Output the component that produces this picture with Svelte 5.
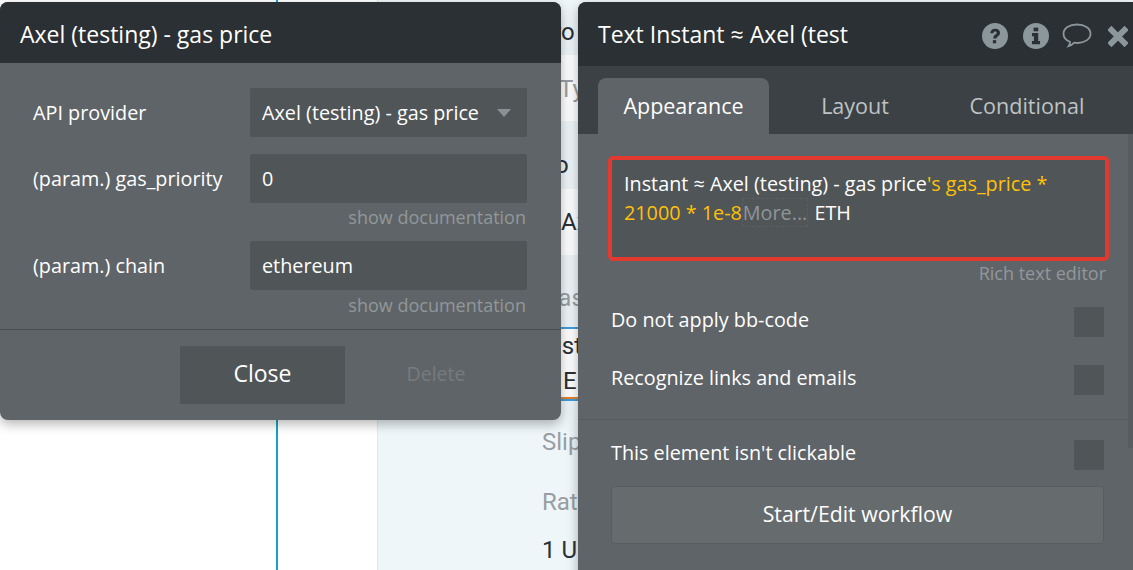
<script>
  const params = [
    { label: 'API provider', value: 'Axel (testing) - gas price', select: true },
    { label: '(param.) gas_priority', value: '0', doc: true },
    { label: '(param.) chain', value: 'ethereum', doc: true }
  ];
  const checks1 = ['Do not apply bb-code', 'Recognize links and emails'];
</script>

<div class="canvas">
  <div class="line teal"></div>
  <div class="line red"></div>
  <div class="bluepanel">
    <div class="band white b1"></div>
    <div class="band white b2"></div>
    <div class="band white b3"></div>
    <div class="bg t1">Pro</div>
    <div class="bg t2 grey">Ty</div>
    <div class="bg t3">o</div>
    <div class="bg t4">Ax</div>
    <div class="bg t5 grey">Gas</div>
    <div class="selected"></div>
    <div class="bg t6">Inst</div>
    <div class="bg t7">E</div>
    <div class="bg t8 grey">Slip</div>
    <div class="bg t9 grey">Rat</div>
    <div class="bg t10">1 U</div>
  </div>

  <section class="win left">
    <header class="head"><span class="title">Axel (testing) - gas price</span></header>
    <div class="form">
      {#each params as p}
        <div class="row">
          <div class="label">{p.label}</div>
          <div class="field">
            <span>{p.value}</span>
            {#if p.select}<i class="caret"></i>{/if}
          </div>
        </div>
        {#if p.doc}<div class="doc">show documentation</div>{/if}
      {/each}
    </div>
    <div class="foot">
      <div class="close">Close</div>
      <div class="delete">Delete</div>
    </div>
  </section>

  <section class="win right">
    <header class="head">
      <span class="title">Text Instant ≈ Axel (test</span>
      <div class="icons">
        <svg width="26" height="26" viewBox="0 0 27 27"><circle cx="13.5" cy="13.5" r="13.5" fill="#8c979c"/><path d="M8.600 10.600c.3-3 2.400-4.500 5.100-4.500 2.900 0 5 1.700 5 4.100 0 1.900-1 2.800-2.300 3.700-1 .7-1.300 1.100-1.300 2.200h-3.300c-.1-2 .4-3 1.800-4 1.100-.8 1.700-1.200 1.700-2 0-.8-.7-1.300-1.600-1.300-1 0-1.700.6-1.900 1.900z" fill="#2a3033"/><rect x="11.300" y="17.800" width="3.400" height="3.300" fill="#2a3033"/></svg>
        <svg width="26" height="26" viewBox="0 0 27 27"><circle cx="13.500" cy="13.500" r="13.500" fill="#8c979c"/><rect x="11" y="4.800" width="4.800" height="3.800" fill="#2a3033"/><path d="M9.300 10.400h6.500v8.300h1.900v3.300H9.300v-3.300h2v-5h-2z" fill="#2a3033"/></svg>
        <svg class="bubble" width="30" height="26" viewBox="0 0 30 26"><path d="M15 1.500c7.500 0 13.500 3.800 13.500 9.200S22.500 20 15.500 20c-1.200 0-2.300-.1-3.300-.3-1.500 1.700-3.500 3-5.700 3.500 1-1.300 1.500-2.700 1.500-4.300C4 17.200 1.500 14.200 1.500 10.700 1.500 5.300 7.500 1.500 15 1.500z" fill="none" stroke="#8c979c" stroke-width="1.800"/></svg>
        <svg class="x" width="20" height="21" viewBox="0 0 20 21"><path d="M3.500 4l13 13M16.500 4l-13 13" stroke="#8c979c" stroke-width="6" stroke-linecap="square" fill="none"/></svg>
      </div>
    </header>
    <nav class="tabs">
      <div class="tab active">Appearance</div>
      <div class="tab layout">Layout</div>
      <div class="tab cond">Conditional</div>
    </nav>
    <div class="scroll"></div>
    <div class="body">
      <div class="editor">
        <div>Instant ≈ Axel (testing) - gas price<span class="dyn">'s gas_price * 21000 * 1e-8</span><span class="more">More...</span> ETH</div>
      </div>
      <div class="rich">Rich text editor</div>
      <div class="checks">
        {#each checks1 as c}
          <div class="check"><span>{c}</span><i class="box"></i></div>
        {/each}
      </div>
      <hr class="sep" />
      <div class="check third"><span>This element isn't clickable</span><i class="box"></i></div>
      <div class="wf">Start/Edit workflow</div>
    </div>
  </section>
</div>

<style>
  :global(body) { margin: 0; background: #fff; }
  .canvas {
    position: relative;
    width: 1133px;
    height: 570px;
    overflow: hidden;
    background: #fff;
    font-family: "Open Sans", sans-serif;
  }
  .line { position: absolute; top: 0; bottom: 0; width: 2px; }
  .teal { left: 276px; background: #17a2c4; }
  .red { left: 871px; width: 1px; background: #c0202a; }
  .bluepanel {
    position: absolute;
    left: 377px;
    top: 0;
    right: 0;
    bottom: 0;
    background: #eef6f9;
    border-left: 1px solid #d5ebf5;
    font-family: Roboto, sans-serif;
  }
  .band { position: absolute; left: 0; right: 0; background: #fff; }
  .b1 { top: 55px; height: 66px; }
  .b2 { top: 189px; height: 66px; }
  .b3 { top: 327px; height: 73px; }
  .selected {
    position: absolute;
    left: 0;
    right: 0;
    top: 327px;
    height: 74px;
    box-sizing: border-box;
    border-top: 2px solid #3f9ee0;
    border-bottom: 2px solid #3f9ee0;
    box-shadow: inset 0 -2px 0 #e8812a;
  }
  .bg { position: absolute; left: 164px; font-size: 24px; color: #2b3036; line-height: 26px; }
  .grey { color: #9a9ea3; }
  .t1 { top: 19px; left: 160px; }
  .t2 { top: 76px; left: 181px; }
  .t3 { top: 152px; left: 177px; }
  .t4 { top: 209px; left: 183px; }
  .t5 { top: 285px; }
  .t6 { top: 333px; }
  .t7 { top: 368px; left: 185px; }
  .t8 { top: 429px; }
  .t9 { top: 489px; }
  .t10 { top: 537px; }

  .win {
    position: absolute;
    top: 2px;
    background: #5f6468;
    color: #fff;
    box-shadow: 0 4px 12px rgba(0, 0, 0, 0.3);
  }
  .left {
    left: 0;
    width: 561px;
    height: 418px;
    border-radius: 8px;
  }
  .right {
    left: 578px;
    width: 555px;
    height: 600px;
    border-radius: 8px 0 0 0;
  }
  .head {
    display: flex;
    align-items: center;
    background: #2a3033;
    border-radius: 8px 8px 0 0;
    padding: 2px 20px 0;
    height: 61px;
    font-size: 23px;
    box-sizing: border-box;
  }
  .right .head { height: 64px; border-radius: 8px 0 0 0; justify-content: space-between; padding: 0 5px 0 20px; }
  .icons { display: flex; align-items: center; gap: 15px; padding-top: 4px; }
  .bubble { margin-left: -2px; }
  .x { margin-left: 1px; }

  .form { padding: 25px 34px 0 33px; height: 267px; box-sizing: border-box; border-bottom: 1px solid #474c4f; }
  .row { display: flex; align-items: center; margin-bottom: 17px; }
  .row:has(+ .doc) { margin-bottom: 0; }
  .label { width: 217px; font-size: 19.8px; }
  .field {
    flex: 1;
    height: 49px;
    display: flex;
    align-items: center;
    justify-content: space-between;
    background: #505558;
    border-radius: 2px;
    padding: 0 16px 0 12px;
    font-size: 19.8px;
  }
  .caret { width: 0; height: 0; border: 7px solid transparent; border-top: 8px solid #8a9094; border-bottom: 0; }
  .doc { text-align: right; font-size: 18px; color: #92979a; line-height: 28px; height: 38px; margin-right: 1px; }
  .doc:last-child { padding-top: 1px; box-sizing: border-box; }
  .foot { display: flex; padding: 16px 0 0 180px; }
  .close {
    width: 165px;
    height: 58px;
    background: #505558;
    display: flex;
    align-items: center;
    justify-content: center;
    font-size: 23px;
    padding-bottom: 4px;
    box-sizing: border-box;
  }
  .delete {
    width: 182px;
    height: 58px;
    display: flex;
    align-items: center;
    justify-content: center;
    font-size: 19.6px;
    color: #767b7f;
    padding-bottom: 3px;
    box-sizing: border-box;
  }

  .tabs {
    display: flex;
    background: #3b4144;
    height: 68px;
    padding: 12px 0 0 20px;
    box-sizing: border-box;
    font-size: 21.5px;
    color: #bfc3c5;
  }
  .tab { display: flex; align-items: center; justify-content: center; height: 56px; padding-bottom: 2px; box-sizing: border-box; }
  .active { width: 171px; background: #5f6468; color: #fff; border-radius: 8px 8px 0 0; }
  .layout { width: 172px; }
  .cond { width: 172px; }
  .scroll { position: absolute; right: 0; top: 132px; width: 5px; height: 314px; background: #575c5f; }
  .body { padding: 22px 29px 0 32px; position: relative; }
  .editor {
    width: 501px;
    height: 105px;
    box-sizing: border-box;
    background: #505558;
    border: 4px solid #e33a30;
    border-radius: 5px;
    padding: 9px 12px;
    margin-left: -2px;
    font-size: 19.8px;
    line-height: 29px;
  }
  .dyn { color: #ffc107; }
  .more { color: #8f9498; outline: 1px dashed #5a5f63; margin-left: 1px; margin-right: 2px; }
  .rich { text-align: right; font-size: 18px; color: #92979a; line-height: 24px; height: 24px; margin-right: -2px; }
  .checks { padding-top: 8px; }
  .check { display: flex; justify-content: space-between; align-items: center; font-size: 19.8px; height: 58px; }
  .check span { padding: 0 0 6px 1px; }
  .box { width: 30px; height: 30px; background: #505558; border-radius: 1px; }
  .sep { border: 0; border-top: 1px solid #565b5e; margin: 10px -29px 0 -32px; }
  .third { margin-top: 6px; }
  .wf {
    height: 58px;
    margin: 2px 0 0 1px;
    box-sizing: border-box;
    border: 1px solid #585d60;
    border-radius: 3px;
    background: #666b6e;
    display: flex;
    align-items: center;
    justify-content: center;
    font-size: 21.3px;
    padding-bottom: 3px;
  }
</style>
